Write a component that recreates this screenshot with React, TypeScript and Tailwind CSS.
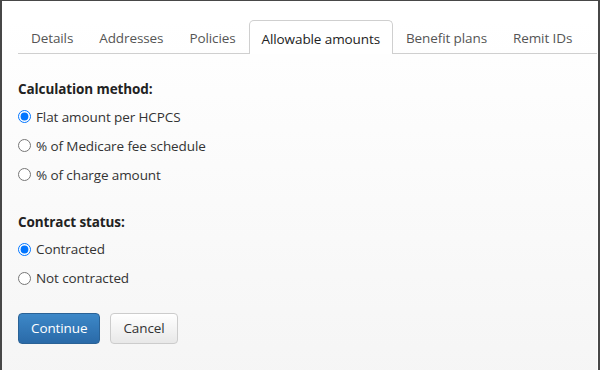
import { useState } from 'react';

const TABS = ['Details', 'Addresses', 'Policies', 'Allowable amounts', 'Benefit plans', 'Remit IDs'];

const METHODS = ['Flat amount per HCPCS', '% of Medicare fee schedule', '% of charge amount'];
const STATUSES = ['Contracted', 'Not contracted'];

function RadioRow({ name, label, checked, onChange }: { name: string; label: string; checked: boolean; onChange: () => void }) {
  return (
    <label className="flex h-[29px] items-center gap-[5px]">
      <input type="radio" name={name} checked={checked} onChange={onChange} className="m-0 h-[13px] w-[13px]" />
      <span>{label}</span>
    </label>
  );
}

export default function App() {
  const [method, setMethod] = useState(METHODS[0]);
  const [status, setStatus] = useState(STATUSES[0]);

  return (
    <div
      className="h-[370px] w-[600px] border-b-[3px] border-l-2 border-r-2 border-t border-[#474747] text-[13.5px] tracking-[-0.1px] text-[#333]"
      style={{ fontFamily: '"Open Sans", "Noto Sans", sans-serif' }}
    >
      <div className="h-full border-b border-r border-white bg-gradient-to-b from-white to-[#f5f5f5] pl-4">
        {/* Tabs */}
        <div className="mt-[19px] flex h-[34px] whitespace-nowrap border-b border-[#cfcfcf]">
          {TABS.map((t) => {
            const active = t === 'Allowable amounts';
            return (
              <div
                key={t}
                className={
                  active
                    ? '-mb-px flex items-center rounded-t-[5px] border border-b-0 border-[#cfcfcf] bg-white px-[12px] pt-[3px] text-[#222]'
                    : 'flex items-center border border-transparent px-[12px] pt-[3px] text-[#555]'
                }
              >
                {t}
              </div>
            );
          })}
        </div>

        {/* Form */}
        <div className="pt-[25px]">
          <div className="mb-[3px] font-bold text-[#222]">Calculation method:</div>
          {METHODS.map((m) => (
            <RadioRow key={m} name="method" label={m} checked={method === m} onChange={() => setMethod(m)} />
          ))}

          <div className="mb-[2px] mt-[23px] font-bold text-[#222]">Contract status:</div>
          {STATUSES.map((s) => (
            <RadioRow key={s} name="status" label={s} checked={status === s} onChange={() => setStatus(s)} />
          ))}

          <div className="mt-[20px] flex gap-[10px]">
            <button className="h-[31px] rounded-[4px] border border-[#2a6296] bg-gradient-to-b from-[#3d88c8] to-[#2a6aa8] px-[12px] text-white">
              Continue
            </button>
            <button className="h-[31px] rounded-[4px] border border-[#cccccc] bg-gradient-to-b from-white to-[#e8e8e8] px-[12px] text-[#333]">
              Cancel
            </button>
          </div>
        </div>
      </div>
    </div>
  );
}
